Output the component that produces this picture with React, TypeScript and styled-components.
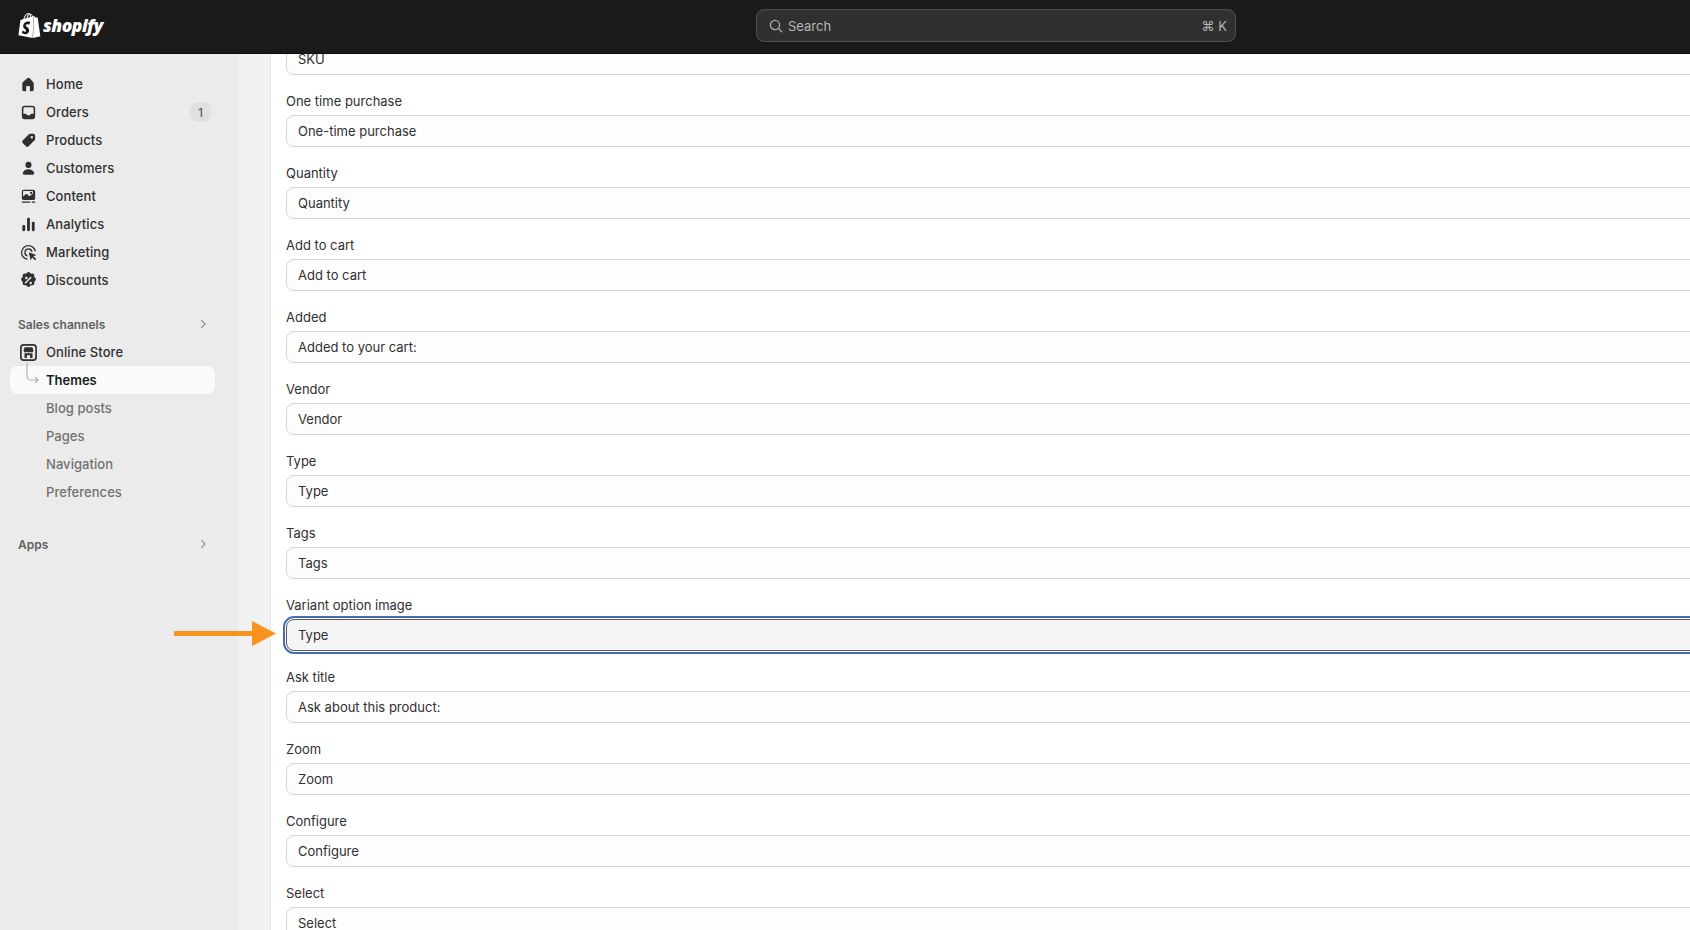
import React from "react";
import styled, { createGlobalStyle } from "styled-components";
import { SiShopify } from "react-icons/si";

const GlobalStyle = createGlobalStyle`
  html, body {
    margin: 0;
    height: 100%;
    overflow: hidden;
    background: #f1f1f1;
    font-family: Inter, "Liberation Sans", sans-serif;
  }
`;

const ICONS: Record<string, React.ReactNode> = {
  home: (
    <path d="M11.3 3.5a2 2 0 0 0-2.6 0l-4.5 3.9a2 2 0 0 0-.7 1.5v6.35c0 .97.78 1.75 1.75 1.75h2.25v-4.5a1 1 0 0 1 1-1h2a1 1 0 0 1 1 1v4.5h2.25a1.75 1.75 0 0 0 1.75-1.75v-6.35a2 2 0 0 0-.7-1.5z" />
  ),
  orders: (
    <path
      fillRule="evenodd"
      d="M6 3h8a3 3 0 0 1 3 3v8a3 3 0 0 1-3 3H6a3 3 0 0 1-3-3V6a3 3 0 0 1 3-3zm0 1.6A1.4 1.4 0 0 0 4.6 6v5.4h2.2c.6 0 1 .3 1.2.8.3.6 1 1 2 1s1.7-.4 2-1c.2-.5.6-.8 1.2-.8h2.2V6A1.4 1.4 0 0 0 14 4.6z"
    />
  ),
  products: (
    <path
      fillRule="evenodd"
      d="M11.6 3H15a2 2 0 0 1 2 2v3.4a2 2 0 0 1-.6 1.4l-6.3 6.3a2 2 0 0 1-2.8 0l-3.4-3.4a2 2 0 0 1 0-2.8l6.3-6.3a2 2 0 0 1 1.4-.6zm1.9 2.2a1.3 1.3 0 1 0 0 2.6 1.3 1.3 0 0 0 0-2.6z"
    />
  ),
  customers: (
    <>
      <circle cx="10" cy="6.2" r="3.2" />
      <path d="M10 10.8c-3 0-5.4 1.5-6 4-.25 1 .5 1.7 1.4 1.7h9.2c.9 0 1.65-.7 1.4-1.7-.6-2.5-3-4-6-4z" />
    </>
  ),
  content: (
    <path
      fillRule="evenodd"
      d="M5 2.800h10a2 2 0 0 1 2 2v7a2 2 0 0 1-2 2H5a2 2 0 0 1-2-2v-7a2 2 0 0 1 2-2zm0 1.300a.7.7 0 0 0-.7.7v5.200l2.800-2.300c.4-.3 1-.3 1.400 0l2.500 2 3.100-2.400c.2-.15.4-.2.6-.2V4.800a.7.7 0 0 0-.7-.7zM12.700 5a1.200 1.200 0 1 1 0 2.400 1.200 1.200 0 0 1 0-2.400zM3 15.300h9v1.400H3zm10.500 0H17v1.400h-3.500z"
    />
  ),
  analytics: (
    <>
      <rect x="3.500" y="10.500" width="3" height="6.500" rx="1.200" />
      <rect x="8.500" y="3" width="3" height="14" rx="1.200" />
      <rect x="13.500" y="7" width="3" height="10" rx="1.200" />
    </>
  ),
  marketing: (
    <>
      <path d="M10 2a8 8 0 0 1 7.900 6.800h-1.600A6.500 6.500 0 1 0 8.800 16.400v1.500A8 8 0 0 1 10 2z" />
      <path d="M10 5.500a4.500 4.500 0 0 1 4.400 3.600h-1.600A3 3 0 1 0 8.900 12.800v1.550A4.500 4.500 0 0 1 10 5.500z" />
      <path d="M10.300 9.800l8 2.700-3.200 1.400 3 3-1.300 1.300-3-3-1.500 3.200z" />
    </>
  ),
  discounts: (
    <path
      fillRule="evenodd"
      d="M8.300 1.900a2.300 2.300 0 0 1 3.400 0l.8.9 1.300-.1a2.300 2.300 0 0 1 2.400 2.400l-.1 1.300.9.800a2.300 2.300 0 0 1 0 3.400l-.9.800.1 1.300a2.300 2.300 0 0 1-2.400 2.400l-1.300-.1-.8.9a2.300 2.300 0 0 1-3.400 0l-.8-.9-1.300.1a2.300 2.300 0 0 1-2.400-2.400l.1-1.300-.9-.8a2.300 2.300 0 0 1 0-3.400l.9-.8-.1-1.300a2.300 2.300 0 0 1 2.400-2.400l1.300.1zM7.700 6a1.300 1.300 0 1 0 0 2.600 1.300 1.300 0 0 0 0-2.600zm4.600 5.400a1.300 1.300 0 1 0 0 2.600 1.300 1.300 0 0 0 0-2.600zm.6-5.100a.8.800 0 0 0-1.100 0l-5.700 5.700a.8.800 0 0 0 1.100 1.100l5.700-5.700a.8.800 0 0 0 0-1.100z"
    />
  ),
};

const NAV = [
  { icon: "home", label: "Home" },
  { icon: "orders", label: "Orders", badge: "1" },
  { icon: "products", label: "Products" },
  { icon: "customers", label: "Customers" },
  { icon: "content", label: "Content" },
  { icon: "analytics", label: "Analytics" },
  { icon: "marketing", label: "Marketing" },
  { icon: "discounts", label: "Discounts" },
];

const SUB_ITEMS = ["Blog posts", "Pages", "Navigation", "Preferences"];

// the SKU field is scrolled under the top bar, only its input still shows
const FIELDS = [
  { value: "SKU" },
  { label: "One time purchase", value: "One-time purchase" },
  { label: "Quantity", value: "Quantity" },
  { label: "Add to cart", value: "Add to cart" },
  { label: "Added", value: "Added to your cart:" },
  { label: "Vendor", value: "Vendor" },
  { label: "Type", value: "Type" },
  { label: "Tags", value: "Tags" },
  { label: "Variant option image", value: "Type", focused: true },
  { label: "Ask title", value: "Ask about this product:" },
  { label: "Zoom", value: "Zoom" },
  { label: "Configure", value: "Configure" },
  { label: "Select", value: "Select" },
];

const Chevron = () => (
  <ChevronIcon viewBox="0 0 10 10">
    <path d="M3.500 1.800 6.800 5 3.500 8.200" />
  </ChevronIcon>
);

const App = () => {
  return (
    <Page>
      <GlobalStyle />
      <TopBar>
        <Logo>
          <SiShopify size={25} color="#fff" />
          <LogoText>shopify</LogoText>
        </Logo>
        <Search>
          <svg width="16" height="16" viewBox="0 0 16 16" fill="none" stroke="#a8a8a8" strokeWidth="1.300">
            <circle cx="7" cy="7" r="4.600" />
            <path d="m10.500 10.500 3.200 3.200" strokeLinecap="round" />
          </svg>
          <SearchText>Search</SearchText>
          <Shortcut>⌘ K</Shortcut>
        </Search>
      </TopBar>
      <Body>
        <Sidebar>
          {NAV.map((item) => (
            <NavRow key={item.label}>
              <NavIcon viewBox="0 0 20 20">{ICONS[item.icon]}</NavIcon>
              <NavLabel>{item.label}</NavLabel>
              {item.badge && <Badge>{item.badge}</Badge>}
            </NavRow>
          ))}
          <SectionRow $gap={16}>
            <SectionTitle>Sales channels</SectionTitle>
            <Chevron />
          </SectionRow>
          <NavRow>
            <NavIcon viewBox="1 1 18 18">
              <path
                fillRule="evenodd"
                d="M5.500 2h9A3.500 3.500 0 0 1 18 5.500v9a3.500 3.500 0 0 1-3.500 3.500h-9A3.500 3.500 0 0 1 2 14.500v-9A3.500 3.500 0 0 1 5.500 2zm0 1.600a1.900 1.900 0 0 0-1.900 1.900v9c0 1.050.85 1.900 1.900 1.900h9a1.900 1.900 0 0 0 1.900-1.900v-9a1.900 1.900 0 0 0-1.900-1.900z"
              />
              <path
                fillRule="evenodd"
                d="M6.300 5h7.400l1 3.200c0 1-.8 1.700-1.700 1.700-.6 0-1-.2-1.300-.5-.4.300-1 .5-1.700.5s-1.300-.2-1.700-.5c-.3.300-.7.500-1.300.5-.9 0-1.700-.7-1.700-1.700zM6.200 10.800h7.600v4.400h-2.300v-2.500h-3v2.500H6.200z"
              />
            </NavIcon>
            <NavLabel>Online Store</NavLabel>
          </NavRow>
          <ActiveRow>
            <Connector viewBox="0 0 14 24" fill="none">
              <path d="M1 0v14a4 4 0 0 0 4 4h7M9 15l3 3-3 3" />
            </Connector>
            <ActiveLabel>Themes</ActiveLabel>
          </ActiveRow>
          {SUB_ITEMS.map((label) => (
            <SubRow key={label}>{label}</SubRow>
          ))}
          <SectionRow $gap={24}>
            <SectionTitle>Apps</SectionTitle>
            <Chevron />
          </SectionRow>
        </Sidebar>
        <Gutter>
          <Arrow viewBox="0 0 102 25" fill="#f7931e">
            <rect x="0" y="10" width="80" height="5" />
            <path d="M78 0l24 12.500-24 12.500z" />
          </Arrow>
        </Gutter>
        <Panel>
          <FieldList>
            {FIELDS.map((field) => (
              <Field key={field.value + (field.label || "")}>
                {field.label && <FieldLabel>{field.label}</FieldLabel>}
                <Control $focused={field.focused}>{field.value}</Control>
              </Field>
            ))}
          </FieldList>
        </Panel>
      </Body>
    </Page>
  );
};

const Page = styled.div`
  height: 100vh;
  display: flex;
  flex-direction: column;
  overflow: hidden;
`;

const TopBar = styled.header`
  flex: none;
  height: 54px;
  box-sizing: border-box;
  background: #1a1a1a;
  border-bottom: 1px solid #0c0c0c;
  display: flex;
  align-items: center;
  padding-bottom: 2px;
`;

const Logo = styled.div`
  width: 756px;
  box-sizing: border-box;
  padding-left: 17px;
  display: flex;
  align-items: center;
  gap: 1px;
`;

const LogoText = styled.span`
  font-family: "Open Sans", sans-serif;
  font-style: italic;
  font-weight: 800;
  font-size: 17.500px;
  letter-spacing: -0.500px;
  color: #fff;
  position: relative;
  top: -1px;
`;

const Search = styled.div`
  width: 480px;
  height: 33px;
  box-sizing: border-box;
  background: #303030;
  border: 1px solid #4f4f4f;
  border-radius: 8px;
  display: flex;
  align-items: center;
  padding: 0 8px 0 11px;
  gap: 4px;
`;

const SearchText = styled.span`
  flex: 1;
  font-size: 13px;
  color: #b5b5b5;
`;

const Shortcut = styled.span`
  font-size: 13px;
  color: #b5b5b5;
`;

const Body = styled.div`
  flex: 1;
  display: flex;
  min-height: 0;
`;

const Sidebar = styled.nav`
  flex: none;
  width: 238px;
  box-sizing: border-box;
  background: #ebebeb;
  padding: 16px 23px 0 10px;
`;

const NavRow = styled.div`
  height: 28px;
  display: flex;
  align-items: center;
  padding: 0 4px 0 9px;
`;

const NavIcon = styled.svg`
  width: 19px;
  height: 19px;
  flex: none;
  fill: #303030;
  margin-right: 8px;
`;

const NavLabel = styled.span`
  flex: 1;
  font-size: 13px;
  font-weight: 500;
  letter-spacing: 0.080px;
  color: #303030;
`;

const Badge = styled.span`
  width: 21px;
  height: 20px;
  border-radius: 8px;
  background: #e0e0e0;
  color: #616161;
  font-size: 12px;
  font-weight: 500;
  display: flex;
  align-items: center;
  justify-content: center;
`;

const SectionRow = styled.div<{ $gap: number }>`
  height: 28px;
  margin-top: ${(props) => props.$gap}px;
  display: flex;
  align-items: center;
  justify-content: space-between;
  padding: 0 6px 0 8px;
`;

const SectionTitle = styled.span`
  font-size: 12px;
  font-weight: 600;
  color: #616161;
`;

const ChevronIcon = styled.svg`
  width: 12px;
  height: 12px;
  fill: none;
  stroke: #8a8a8a;
  stroke-width: 0.900;
`;

const ActiveRow = styled.div`
  height: 28px;
  display: flex;
  align-items: center;
  position: relative;
  padding-left: 36px;
  background: #fafafa;
  border-radius: 8px;
`;

const Connector = styled.svg`
  position: absolute;
  left: 16px;
  top: -4px;
  width: 14px;
  height: 24px;
  stroke: #b0b0b0;
  stroke-width: 1.100;
`;

const ActiveLabel = styled.span`
  font-size: 13px;
  font-weight: 600;
  color: #1a1a1a;
`;

const SubRow = styled.div`
  height: 28px;
  display: flex;
  align-items: center;
  padding-left: 36px;
  font-size: 13px;
  font-weight: 450;
  letter-spacing: 0.050px;
  color: #717171;
`;

const Gutter = styled.div`
  flex: none;
  width: 32px;
  background: #f1f1f1;
  position: relative;
`;

const Arrow = styled.svg`
  position: absolute;
  z-index: 2;
  left: -64px;
  top: 567px;
  width: 102px;
  height: 25px;
`;

const Panel = styled.main`
  flex: 1;
  min-width: 0;
  overflow: hidden;
  background: #fff;
  border-left: 1px solid #e6e6e6;
  padding-left: 15px;
`;

const FieldList = styled.div`
  width: 1600px;
  margin-top: -11px;
  display: flex;
  flex-direction: column;
  gap: 16px;
`;

const Field = styled.div`
  display: flex;
  flex-direction: column;
  gap: 4px;
`;

const FieldLabel = styled.label`
  height: 20px;
  line-height: 20px;
  font-size: 13px;
  color: #303030;
`;

const Control = styled.div<{ $focused?: boolean }>`
  height: 32px;
  box-sizing: border-box;
  display: flex;
  align-items: center;
  padding: 0 11px;
  border-radius: 8px;
  font-size: 13px;
  color: #303030;
  background: ${(props) => (props.$focused ? "#f5f5f5" : "#fdfdfd")};
  border: 1px solid ${(props) => (props.$focused ? "#565c68" : "#d4d4d4")};
  outline: ${(props) => (props.$focused ? "2px solid #4a6bb5" : "none")};
  outline-offset: 1px;
`;

export default App;
